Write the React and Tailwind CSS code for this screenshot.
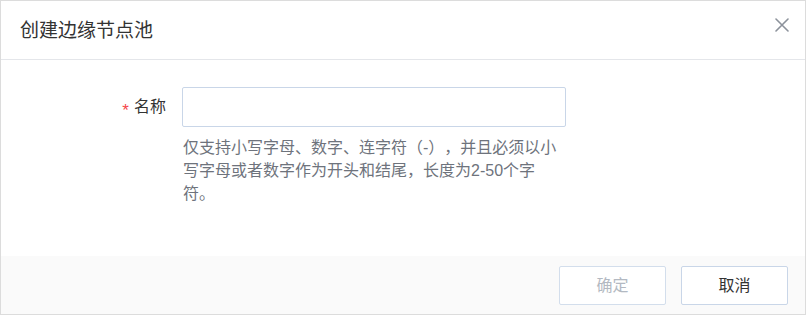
export default function App() {
  const font = { fontFamily: '"Liberation Sans", "Noto Sans CJK SC", sans-serif' };
  return (
    <div className="w-[807px] h-[315px] bg-white [text-spacing-trim:space-all]" style={font}>
      <div className="w-[806px] h-[315px] border border-[#dcdcdc] flex flex-col bg-white">
        <div className="h-[59px] shrink-0 border-b border-[#e4e6ea] flex items-center justify-between pl-[19px] pr-[16px]">
          <span className="text-[19px] leading-[24px] text-[#333] mt-[2px]">创建边缘节点池</span>
          <svg className="mb-[10px]" width="14" height="14" viewBox="0 0 14 14" fill="none">
            <path d="M1 1L13 13M13 1L1 13" stroke="#8c929b" strokeWidth="1.6" strokeLinecap="round" />
          </svg>
        </div>
        <div className="flex-1 pt-[27px]">
          <div className="flex items-start">
            <div className="w-[165px] shrink-0 h-[40px] flex items-center justify-end">
              <span className="text-[#f5464a] text-[17px] leading-none mr-[5px] mt-[6px]">*</span>
              <span className="text-[16px] text-[#333] leading-[20px]">名称</span>
            </div>
            <div className="ml-[16px] flex flex-col">
              <input
                className="w-[384px] h-[40px] border border-[#c9d6e8] rounded-[2px] outline-none px-[10px] text-[16px] bg-white"
                type="text"
              />
              <p className="w-[380px] mt-[9px] text-[16px] leading-[23px] text-[#6e737c] pl-[1px]">
                仅支持小写字母、数字、连字符（-），并且必须以小写字母或者数字作为开头和结尾，长度为2-50个字符。
              </p>
            </div>
          </div>
        </div>
        <div className="h-[58px] shrink-0 bg-[#fafafa] flex items-center justify-end gap-[15px] pr-[17px] pt-[1px]">
          <button className="w-[107px] h-[39px] border border-[#d3deec] rounded-[2px] bg-white text-[16px] text-[#b3b9c2]">
            确定
          </button>
          <button className="w-[107px] h-[39px] border border-[#c9d6e8] rounded-[2px] bg-white text-[16px] text-[#333]">
            取消
          </button>
        </div>
      </div>
    </div>
  );
}
